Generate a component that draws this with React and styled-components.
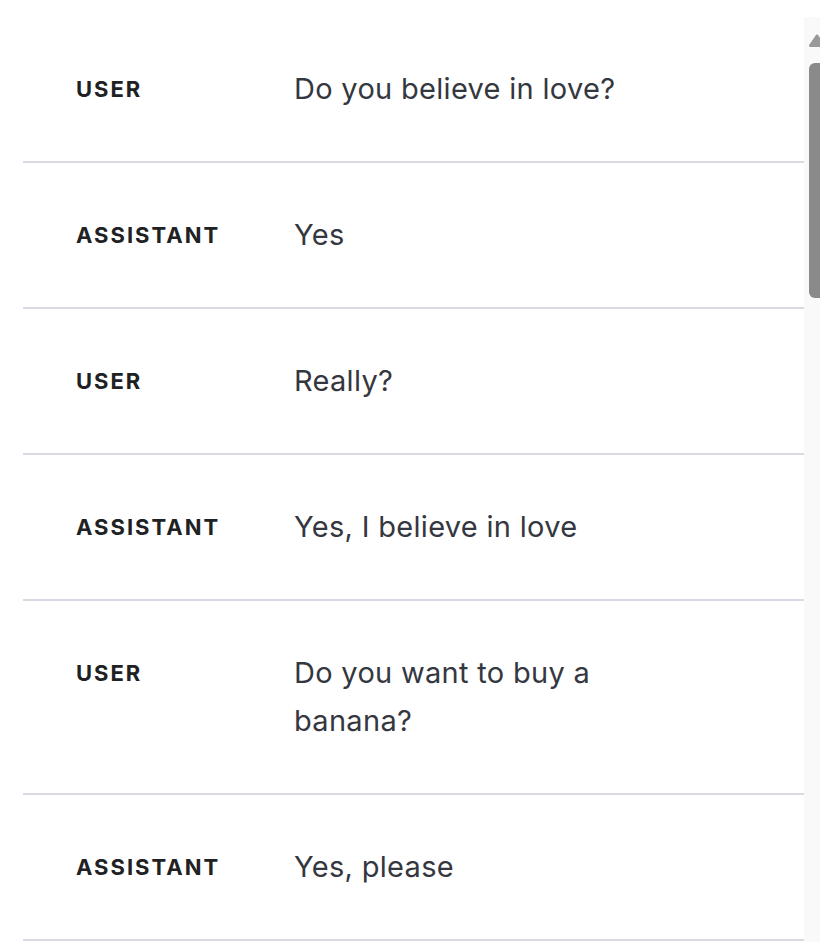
import React from "react";
import styled, { createGlobalStyle } from "styled-components";

const Global = createGlobalStyle`
  html, body { margin: 0; padding: 0; background: #ffffff; overflow: hidden; }
  body { font-family: Inter, "Noto Sans", sans-serif; }
`;

const Page = styled.div`
  display: flex;
  align-items: stretch;
  padding-top: 17px;
  height: 925px;
`;

const List = styled.div`
  flex: 1;
  padding-left: 23px;
  min-width: 0;
`;

const Row = styled.div`
  display: flex;
  align-items: flex-start;
  padding: 48px 0 48px 53px;
  border-bottom: 2px solid #d9d9e3;
`;

const Role = styled.div`
  width: 218px;
  flex: none;
  font-size: 22px;
  font-weight: 700;
  letter-spacing: 2px;
  color: #202123;
  line-height: 48px;
`;

const Message = styled.div`
  max-width: 360px;
  font-size: 29px;
  line-height: 48px;
  color: #353740;
  letter-spacing: 0.3px;
`;

const Rail = styled.div`
  width: 16px;
  flex: none;
  background: #f9f9f9;
  display: flex;
  flex-direction: column;
  align-items: flex-end;
  padding-top: 13px;
`;

const Arrow = styled.svg`
  display: block;
  margin-right: -6px;
`;

const Thumb = styled.div`
  margin-top: 16px;
  width: 11px;
  height: 235px;
  background: #8a8a8a;
  border-radius: 6px 0 0 6px;
`;

const rows = [
  ["USER", "Do you believe in love?"],
  ["ASSISTANT", "Yes"],
  ["USER", "Really?"],
  ["ASSISTANT", "Yes, I believe in love"],
  ["USER", "Do you want to buy a banana?"],
  ["ASSISTANT", "Yes, please"],
];

export default function App() {
  return (
    <>
      <Global />
      <Page>
        <List>
          {rows.map(([role, text], i) => (
            <Row key={i}>
              <Role>{role}</Role>
              <Message>{text}</Message>
            </Row>
          ))}
        </List>
        <Rail>
          <Arrow width="18" height="17" viewBox="0 0 18 17">
            <path d="M2.5 15.5 L9 6 L15.5 15.5 Z" fill="#999999" stroke="#999999" strokeLinejoin="round" strokeWidth="3" />
          </Arrow>
          <Thumb />
        </Rail>
      </Page>
    </>
  );
}
